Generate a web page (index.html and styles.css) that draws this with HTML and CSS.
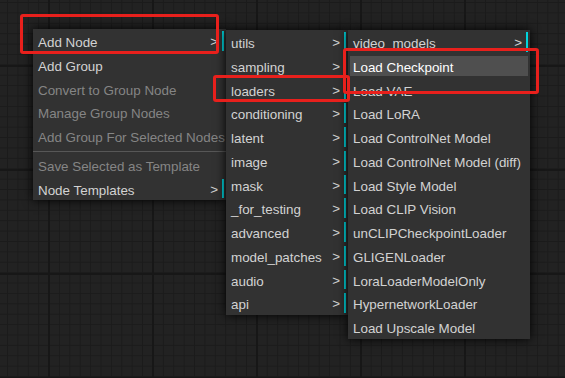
FILE: index.html
```html
<!DOCTYPE html>
<html lang="en">
<head>
  <meta charset="UTF-8">
  <title>Context Menu</title>
  <link rel="stylesheet" href="styles.css">
</head>
<body>
  <div class="canvas">
    <!-- main context menu -->
    <div class="menu menu-main">
      <div class="entry sub">Add Node</div>
      <div class="entry">Add Group</div>
      <div class="entry disabled">Convert to Group Node</div>
      <div class="entry disabled">Manage Group Nodes</div>
      <div class="entry disabled">Add Group For Selected Nodes</div>
      <div class="separator"></div>
      <div class="entry disabled">Save Selected as Template</div>
      <div class="entry sub">Node Templates</div>
    </div>

    <!-- Add Node categories -->
    <div class="menu menu-cats">
      <div class="entry sub">utils</div>
      <div class="entry sub">sampling</div>
      <div class="entry sub">loaders</div>
      <div class="entry sub">conditioning</div>
      <div class="entry sub">latent</div>
      <div class="entry sub">image</div>
      <div class="entry sub">mask</div>
      <div class="entry sub">_for_testing</div>
      <div class="entry sub">advanced</div>
      <div class="entry sub">model_patches</div>
      <div class="entry sub">audio</div>
      <div class="entry sub">api</div>
    </div>

    <!-- loaders -->
    <div class="menu menu-loaders">
      <div class="entry sub">video_models</div>
      <div class="entry active">Load Checkpoint</div>
      <div class="entry">Load VAE</div>
      <div class="entry">Load LoRA</div>
      <div class="entry">Load ControlNet Model</div>
      <div class="entry">Load ControlNet Model (diff)</div>
      <div class="entry">Load Style Model</div>
      <div class="entry">Load CLIP Vision</div>
      <div class="entry">unCLIPCheckpointLoader</div>
      <div class="entry">GLIGENLoader</div>
      <div class="entry">LoraLoaderModelOnly</div>
      <div class="entry">HypernetworkLoader</div>
      <div class="entry">Load Upscale Model</div>
    </div>

    <!-- red annotation boxes -->
    <div class="mark mark-add"></div>
    <div class="mark mark-loaders"></div>
    <div class="mark mark-ckpt"></div>
  </div>
</body>
</html>
```

FILE: styles.css
```css
body {
  margin: 0;
  padding: 0;
  background: #202020;
}

.canvas {
  position: relative;
  width: 565px;
  height: 378px;
  overflow: hidden;
  background-color: #222;
  background-image:
    linear-gradient(90deg, #171717 2px, transparent 2px),
    linear-gradient(#171717 2px, transparent 2px),
    linear-gradient(90deg, #1b1b1b 1px, transparent 1px),
    linear-gradient(#1b1b1b 1px, transparent 1px);
  background-size: 104px 104px, 104px 104px, 10.4px 10.4px, 10.4px 10.4px;
  background-position: 48px 0, 0 65px, 7px 0, 0 2px;
}

.menu {
  position: absolute;
  display: flex;
  flex-direction: column;
  background: #323232;
  box-shadow: 0 0 10px #000;
  font-family: "Liberation Sans", Arial, sans-serif;
  font-size: 13.4px;
  color: #d2d2d2;
}

.menu-main {
  left: 33px;
  top: 29px;
  width: 193px;
}

.menu-cats {
  left: 226px;
  top: 30px;
  width: 122px;
}

.menu-loaders {
  left: 348px;
  top: 30px;
  width: 182px;
}

.entry {
  position: relative;
  margin: 2px;
  padding: 2px 20px 0 3px;
  height: 17.75px;
  line-height: 19px;
  white-space: nowrap;
  border-right: 2px solid transparent;
}

.entry.sub {
  border-right-color: #00d4dc;
}

.entry.sub::after {
  content: ">";
  position: absolute;
  right: 4px;
  top: 1px;
}

.entry.disabled {
  color: #858585;
}

.entry.active {
  background: #4f4f4f;
  color: #fff;
}

.separator {
  margin: 3px 0 1px;
  height: 0;
  border-top: 1px solid #575757;
}

.mark {
  position: absolute;
  border: 3px solid #e8201c;
  border-radius: 3px;
  box-sizing: border-box;
}

.mark-add {
  left: 20px;
  top: 14px;
  width: 199px;
  height: 40px;
}

.mark-loaders {
  left: 213px;
  top: 75px;
  width: 137px;
  height: 27px;
}

.mark-ckpt {
  left: 343px;
  top: 48px;
  width: 196px;
  height: 46px;
}
```
